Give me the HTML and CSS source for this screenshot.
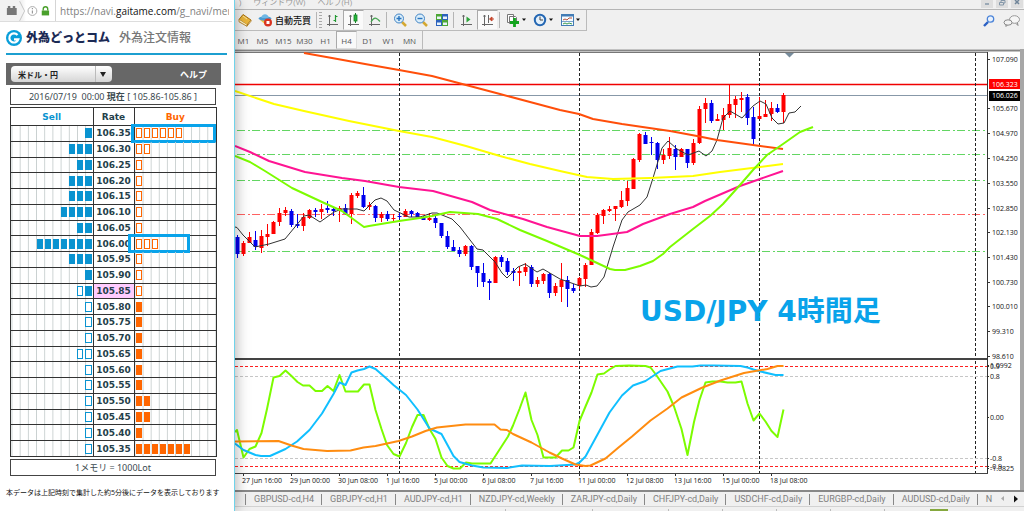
FILE: index.html
```html
<!DOCTYPE html>
<html lang="ja">
<head>
<meta charset="utf-8">
<title>USD/JPY 4時間足</title>
<link rel="stylesheet" href="styles.css">
</head>
<body>
<div class="desktop">
  <aside class="orders">
    <div class="address">
      <svg class="address-icons" width="56" height="22" viewBox="0 0 56 22" aria-hidden="true">
        <path d="M7 8h10v7H7zM8 6h2.500v2H8zM13 6h2.500v2H13z" fill="#777"/>
        <path d="M20 1l5 10-5 10" fill="none" stroke="#c4c4c4"/>
        <circle cx="33" cy="11" r="4.500" fill="none" stroke="#aaa"/>
        <path d="M33 10.500v3M33 8v1.200" stroke="#999" stroke-width="1.200"/>
        <path d="M44 10.500V9a2.300 2.300 0 0 1 4.600 0v1.500" fill="none" stroke="#4aa02c" stroke-width="1.400"/>
        <rect x="42.500" y="10.500" width="7.500" height="5" fill="#4aa02c"/>
      </svg>
      <span class="url">https://navi.<b>gaitame.com</b>/g_navi/menu</span>
    </div>
    <header class="brand">
      <svg width="16" height="16" viewBox="0 0 16 16" aria-hidden="true">
        <circle cx="8" cy="8" r="8" fill="#0a9ed9"/>
        <path d="M11.500 5A4.600 4.600 0 1 0 12.300 9.300H8" fill="none" stroke="#fff" stroke-width="2.200"/>
      </svg>
      <strong>外為どっとコム</strong>
      <h1>外為注文情報</h1>
    </header>
    <div class="pair-bar">
      <select aria-label="通貨ペア"><option>米ドル・円</option></select>
      <a href="#help">ヘルプ</a>
    </div>
    <p class="boxed stamp">2016/07/19&nbsp; 00:00 <b>現在</b> [ 105.86-105.86 ]</p>
    <table class="book">
      <thead><tr><th class="sell">Sell</th><th class="rate">Rate</th><th class="buy">Buy</th></tr></thead>
      <tbody id="book"></tbody>
    </table>
    <p class="boxed unit">1メモリ = 1000Lot</p>
    <p class="note">本データは上記時刻で集計した約5分後にデータを表示しております</p>
  </aside>

  <main class="terminal">
    <nav class="menu">
      <span>)</span><span>ウィンドウ(W)</span><span>ヘルプ(H)</span>
      <div class="window-buttons">
        <button aria-label="最小化"><svg width="12" height="8" viewBox="0 0 12 8"><path d="M4 4h4" stroke="#8497a8" stroke-width="1.500"/></svg></button>
        <button aria-label="元に戻す"><svg width="12" height="8" viewBox="0 0 12 8"><path d="M3.500 2.500h4v2.500h-4zM5 2V.5h4V3H8" fill="none" stroke="#8497a8"/></svg></button>
        <button aria-label="閉じる"><svg width="12" height="8" viewBox="0 0 12 8"><path d="M4 0l4 4M8 0L4 4" stroke="#71869a" stroke-width="1.500"/></svg></button>
      </div>
    </nav>
    <div class="tools-row">
      <div class="tools">
        <button class="tool book-tool" aria-label="メタエディター"><svg width="14" height="14" viewBox="0 0 14 14"><path d="M1 6.500L5 1.500l8 5.500-4 5z" fill="#e9b53c" stroke="#a8700d"/><path d="M1 6.500v2.300l8 4.500v-1.500M9 13.200l4-5V7" fill="#fff3c4" stroke="#a8700d" stroke-width=".8"/><path d="M5 3l4 3" stroke="#fbe59a"/></svg></button>
        <button class="tool auto-tool"><svg width="15" height="14" viewBox="0 0 15 14"><path d="M2 7l6 5 5-6z" fill="#efc33c"/><ellipse cx="7" cy="5.500" rx="6.500" ry="2.200" fill="#4c9bd2"/><path d="M3.500 5C3 0 11 0 10.500 5z" fill="#6fb7e4"/><circle cx="10" cy="9.500" r="4" fill="#d93420"/><rect x="8.500" y="8" width="3" height="3" fill="#fff"/></svg>自動売買</button>
        <i class="sep"></i><i class="grip"></i>
        <button class="tool" aria-label="バーチャート"><svg width="14" height="14" viewBox="0 0 14 14"><path d="M3.500 2v11M1 11.500h11M2.500 3.500l1-1.500 1 1.500" fill="none" stroke="#666"/><path d="M9.500 2v7M7.500 7.500h2M9.500 3.500h2" stroke="#249a34" stroke-width="1.200"/></svg></button>
        <button class="tool on" aria-label="ローソク足"><svg width="14" height="14" viewBox="0 0 14 14"><path d="M3.500 2v11M1 11.500h11M2.500 3.500l1-1.500 1 1.500" fill="none" stroke="#666"/><path d="M8.500 0v10" stroke="#178427"/><rect x="7" y="2" width="3" height="6" fill="#26b53a" stroke="#178427" stroke-width=".8"/></svg></button>
        <button class="tool" aria-label="ラインチャート"><svg width="14" height="14" viewBox="0 0 14 14"><path d="M3.500 2v11M1 11.500h11M2.500 3.500l1-1.500 1 1.500" fill="none" stroke="#666"/><path d="M3 9c3-5 5-5 9-.5" fill="none" stroke="#49a654" stroke-width="1.200"/></svg></button>
        <i class="sep"></i>
        <button class="tool" aria-label="拡大"><svg width="14" height="14" viewBox="0 0 14 14"><path d="M9 9l4 4" stroke="#d4a831" stroke-width="2.500"/><circle cx="6" cy="5.500" r="4.500" fill="#d9edfa" stroke="#4385c5"/><path d="M3.500 5.500h5M6 3v5" stroke="#2774bf" stroke-width="1.400"/></svg></button>
        <button class="tool" aria-label="縮小"><svg width="14" height="14" viewBox="0 0 14 14"><path d="M9 9l4 4" stroke="#d4a831" stroke-width="2.500"/><circle cx="6" cy="5.500" r="4.500" fill="#d9edfa" stroke="#4385c5"/><path d="M3.500 5.500h5" stroke="#2774bf" stroke-width="1.400"/></svg></button>
        <button class="tool" aria-label="整列"><svg width="14" height="14" viewBox="0 0 14 14"><path d="M1 1h6v6H1zM7 7h6v6H7z" fill="#4da736"/><path d="M7 1h6v6H7zM1 7h6v6H1z" fill="#2c62bd"/><path d="M2 3.500h4V6H2zM8 3.500h4V6H8zM2 9.500h4V12H2zM8 9.500h4V12H8z" fill="#e8f3fa"/></svg></button>
        <i class="sep"></i>
        <button class="tool" aria-label="自動スクロール"><svg width="14" height="14" viewBox="0 0 14 14"><path d="M3.500 2v11M1 11.500h11M2.500 3.500l1-1.500 1 1.500" fill="none" stroke="#666"/><path d="M6.500 3.500v6l4-3z" fill="#2ea43b"/></svg></button>
        <button class="tool on" aria-label="チャートシフト"><svg width="14" height="14" viewBox="0 0 14 14"><path d="M3.500 2v11M1 11.500h11M2.500 3.500l1-1.500 1 1.500M7.500 2v8" fill="none" stroke="#666"/><path d="M8.500 6L11 4v4zM10 6h3" fill="#c6462c" stroke="#c6462c"/></svg></button>
        <i class="sep"></i>
        <button class="tool wide" aria-label="インディケータ"><svg width="20" height="14" viewBox="0 0 20 14"><path d="M1.500 1.500h6v8h-6zM3.500 3.500h6l1 1v6h-7z" fill="#fff" stroke="#777"/><path d="M8.500 5v9M4 9.500h9" stroke="#13a51e" stroke-width="2.800"/><path d="M16 5.500h4l-2 2.500z" fill="#111"/></svg></button>
        <button class="tool wide" aria-label="時間足"><svg width="20" height="14" viewBox="0 0 20 14"><circle cx="7" cy="7" r="5.200" fill="#e3f0fb" stroke="#2467b3" stroke-width="2"/><path d="M7 3.500V7h3" fill="none" stroke="#444"/><path d="M16 5.500h4l-2 2.500z" fill="#111"/></svg></button>
        <button class="tool wide" aria-label="定型チャート"><svg width="20" height="14" viewBox="0 0 20 14"><rect x="1.500" y="1.500" width="12" height="11" fill="#f6fbff" stroke="#427cb5"/><path d="M1 2.500h13" stroke="#427cb5" stroke-width="2"/><path d="M3 7l2-1 2 1 2-2h3" fill="none" stroke="#b5523b"/><path d="M2 8.500h11" stroke="#427cb5" stroke-width=".7"/><path d="M3 11l2-1 2 1 2-1 3 1" fill="none" stroke="#3c9b4c"/><path d="M16 5.500h4l-2 2.500z" fill="#111"/></svg></button>
      </div>
      <div class="side-tools">
        <button aria-label="検索"><svg width="12" height="12" viewBox="0 0 12 12"><path d="M1 11l4-4" stroke="#2b60c4" stroke-width="2.400"/><circle cx="7.500" cy="4" r="3.200" fill="#e8f1fc" stroke="#4a83d8" stroke-width="1.300"/></svg></button>
        <button aria-label="チャット"><svg width="18" height="12" viewBox="0 0 18 12"><path d="M13 8.500l2 2-.5-2.500" fill="#eee" stroke="#888"/><ellipse cx="11.500" cy="4.500" rx="5" ry="3.800" fill="#f6f6f6" stroke="#999"/><path d="M3 9v2.500l2-2" fill="#eee" stroke="#888"/><ellipse cx="5" cy="7.500" rx="4" ry="2.700" fill="#f2f2f2" stroke="#888"/></svg></button>
      </div>
    </div>
    <div class="frames">
      <button>M1</button><button>M5</button><button>M15</button><button>M30</button><button>H1</button><button class="on">H4</button><button>D1</button><button>W1</button><button>MN</button>
    </div>
    <div class="chart-row">
      <svg class="chart" viewBox="235 49 785 441" role="img" aria-label="USD/JPY 4時間足">
        <rect x="235" y="49" width="785" height="441" fill="#fff"/>
        <path d="M235 50.500H1020" stroke="#858585" stroke-width="2"/>
        <path d="M235 52.500H988" stroke="#777"/>
        <g class="level"><path d="M237 130.500H987M237 154.500H987M237 180.500H987M237 251.500H987"/><path class="mid" d="M237 214.500H987"/></g>
        <path d="M235 95.500H987" stroke="#8798a8"/>
        <path d="M235 84.500H987" stroke="#f00000" stroke-width="1.500"/>
        <path class="day" d="M399.500 53V358M579.500 53V358M759.500 53V358M975.500 53V358M399.500 361V473M579.500 361V473M759.500 361V473M975.500 361V473"/>
        <path d="M235 376.500H987M235 458.500H987" stroke="#c6c6c6" stroke-dasharray="3 2"/>
        <path d="M235 366.500H987M235 466.500H987" stroke="#ff2020" stroke-dasharray="3 2"/>
        <g id="candles"></g>
        <g class="thin"><polyline points="235,227 237,227.500 243,235 255,247 269,244 285,239 304,216 309,215 320,222 334,212 342,209 357,209 364,211 375,200 381,198 387,201 394,210 409,217 420,217 432,213 437,213 452,219 460,227 477,249 483,250 495,262 502,273 507,278 518,267 525,264 537,272 543,269 560,279 580,286 586,285 591,287 597,286 604,277 613,247 622,220 628,212 640,205 647,197 653,178 662,148 668,141 677,149 688,155 699,151 706,156 712,151 717,140 723,118 730,111 742,118 753,106 760,101 766,104 772,118 778,124 784,123 789,113 795,112 801,106"/></g>
        <g class="curve">
          <polyline stroke="#ff4e0a" points="304,53 332,58 365,64 399,70 432,76 466,85 500,94 530,102 560,110 579,114 593,119 622,124 670,131 697,136 717,140 753,145 783,149"/>
          <polyline stroke="#ffff00" points="235,91 274,104 304,111 349,121 399,131 432,137 466,146 500,156 530,164 560,171 587,177 613,179 650,178 693,176 720,172 760,167 783,164"/>
          <polyline stroke="#ff1493" points="235,146 250,152 269,161 305,172 342,178 365,181 399,187 433,191 472,202 490,210 523,219 547,227 580,236 597,236 627,232 643,224 670,214 693,207 705,201 740,186 760,179 783,171"/>
          <polyline stroke="#7cfc00" points="235,156 250,162 265,171 292,188 322,202 342,211 364,227 369,226 399,221 420,218 432,216 450,212 478,214 497,219 520,230 547,241 580,255 610,269 615,270 625,270 640,266 653,261 663,254 670,247 693,229 710,216 723,204 740,185 753,170 767,155 783,144 800,132 813,127"/>
          <polyline stroke="#7cfc00" points="235,432 237,430 243.500,457.500 249.500,449 255.500,446.500 261.500,433 267,409 273.500,377.500 279.500,376 285.500,370.500 291.500,376 297.500,382 303,385.500 309.500,385.500 315.500,391 322,391 327.500,386 333.500,391 339.500,375 345.500,391.500 358,391.500 364,384.500 369.500,384.500 375.500,410 381.500,429 387,445 393.500,454 399.500,456.500 406,443 412,427 417.500,415 423.500,415 429.500,429 435.500,439 441.500,457.500 447.500,466 453.500,468.500 460,468.500 466,462.500 472,463.500 490.500,463.500 496,455 508,436.500 513,425.500 519.500,409 525.500,392.500 531.500,420 537.500,435 543.500,457.500 555.500,457.500 562,450.500 568.500,450.500 573.500,447.500 579.500,421 585.500,406.500 591.500,392.500 597.500,374.500 604,373.500 609.500,369.500 615.500,366 629,365.500 645.500,366 650.500,367.500 655.500,374 667.500,391.500 674,406.500 681.500,429 687.500,455 694,422 699.500,400 705.500,382.500 712.500,381.500 720.500,381.500 727.500,382.500 735.500,382.500 741.500,381.500 747.500,403.500 753.500,420.500 759.500,413.500 765.500,421.500 771.500,431 777.500,437 783.500,409.500"/>
          <polyline stroke="#10bfff" points="235,443.500 243.500,450 255.500,455 261,456 270,456 285.500,449 297,441.500 309.500,430 322,413.500 333.500,394 339.500,382.500 345.500,385 351.500,372.500 357.500,370.500 364,369 369.500,366.500 375.500,369 387,379 393.500,385 406,395 417.500,409.500 429.500,428.500 441.500,434 453.500,456 459.500,462 472,465.500 483.500,467.500 507,468 522,465.500 550,466 575.500,464.500 579.500,462.500 585.500,456.500 597.500,434.500 609.500,412.500 622,395.500 633,385.500 645.500,381 660.500,371 677.500,366.500 692.500,366.500 700.500,365.500 714,365.500 740.500,366 747.500,367.500 753.500,369.500 760.500,371.500 775.500,375 783.500,375"/>
          <polyline stroke="#ff8c10" points="235,441.500 278.500,441 291.500,445.500 303.500,449 327,451 350.500,450.500 363.500,447.500 375.500,446 398.500,441 412,436.500 425.500,431 437,427.500 465.500,424.500 494.500,424.500 500.500,429.500 507,430 513,434 531.500,442.500 549.500,452.500 562,458.500 575.500,464.500 585.500,466 590.500,465.500 605.500,458.500 618.500,447.500 632,436.500 650.500,420.500 667.500,408.500 681.500,397.500 702.500,387.500 720.500,380.500 744,373 767.500,369 777.500,366 783.500,366"/>
        </g>
        <path d="M785 53h9l-4.500 4.500z" fill="#778c9c"/>
        <path d="M235 359H988" stroke="#444" stroke-width="2"/>
        <path d="M987.500 52V474" stroke="#333"/>
        <path d="M235 473.500H988" stroke="#444"/>
        <g id="axes" class="axis"></g>
        <rect x="989" y="79" width="31" height="10" fill="#f00"/><rect x="989" y="91" width="31" height="10" fill="#000"/>
        <g class="axis tag"><text x="992" y="87">106.323</text><text x="992" y="98">106.026</text></g>
        <text class="caption" x="640" y="321">USD/JPY 4時間足</text>
      </svg>
      <i class="edge"></i>
    </div>
    <div class="tabs">
      <button>GBPUSD-cd,H4</button><button>GBPJPY-cd,H1</button><button>AUDJPY-cd,H1</button><button>NZDJPY-cd,Weekly</button><button>ZARJPY-cd,Daily</button><button>CHFJPY-cd,Daily</button><button>USDCHF-cd,Daily</button><button>EURGBP-cd,Daily</button><button>AUDUSD-cd,Daily</button><button class="cut">N</button>
      <svg class="tab-arrows" width="24" height="14" viewBox="0 0 24 14" aria-hidden="true"><path d="M4 4v5L1 6.500z" fill="#aaa"/><path d="M14 3.500v7l4-3.500z" fill="#111"/></svg>
    </div>
    <div class="status"><i></i><i></i><i></i><i></i><i></i><i></i><i></i><b></b></div>
  </main>
</div>
<script src="app.js"></script>
</body>
</html>
```

FILE: styles.css
```css
* { box-sizing: border-box; }
body { margin: 0; overflow: hidden; background: #f0f0f0; font-family: "Open Sans", "Noto Sans CJK JP", sans-serif; }
button { border: 0; padding: 0; margin: 0; background: none; font: inherit; color: inherit; }
svg { display: block; flex: none; }
p, h1 { margin: 0; }
.desktop { display: flex; min-height: 100vh; }

.orders { flex: none; width: 235px; background: #fff; border-right: 1px solid #6fd3ea; box-shadow: 0 0 14px rgba(0, 0, 0, .35); z-index: 1; position: relative; }
.address { display: flex; align-items: center; height: 22px; margin-right: 2px; background: linear-gradient(90deg, #f2f2f2 22px, #fff 26px); border-bottom: 1px solid #ddd; overflow: hidden; }
.address-icons { border-right: 1px solid #d5d5d5; }
.url { margin: 0 3px 0 4px; flex: 1; min-width: 0; overflow: hidden; font-size: 10px; line-height: 20px; color: #808080; white-space: nowrap; }
.url b { font-weight: 400; color: #111; }
.brand { display: flex; align-items: center; height: 33px; margin: 0 7px 0 6px; border-bottom: 2px solid #1c9fd0; gap: 4px; }
.brand strong { font-size: 12px; line-height: 16px; font-weight: 900; color: #1b2a55; }
.brand h1 { margin-left: 5px; font-size: 12px; line-height: 16px; font-weight: 500; color: #777; }
.pair-bar { position: relative; display: flex; align-items: center; justify-content: space-between; height: 22px; margin: 8px 13px 0 6px; padding: 0 14px 0 5px; background: #676767; }
.pair-bar select { appearance: none; width: 101px; height: 16px; padding: 0 7px; border: 0; border-radius: 4px; color: #222; font: bold 8px "Noto Sans CJK JP", sans-serif; background: linear-gradient(90deg, transparent 84px, #bbb 84px, #bbb 85px, transparent 85px), linear-gradient(#fff, #d5d5d5); }
.pair-bar::after { content: ""; position: absolute; left: 94px; top: 9px; border: 3px solid transparent; border-top: 5px solid #222; border-bottom: 0; pointer-events: none; }
.pair-bar a { font: bold 9px "Noto Sans CJK JP", sans-serif; color: #fff; text-decoration: none; }
.boxed { margin: 0 18px 0 10px; border: 1px solid #444; font: 9px/15px "Noto Sans", "Noto Sans CJK JP", sans-serif; text-align: center; height: 17px; color: #3b4a50; white-space: nowrap; }
.stamp { margin-top: 3px; }
.book { width: 207px; height: 350px; margin: 2px 0 0 10px; border-collapse: collapse; table-layout: fixed; font: bold 9px/12px "DejaVu Sans", sans-serif; color: #24404a; }
.book th, .book td { padding: 0; border: 1px solid #333; text-align: center; line-height: 12px; }
.book thead tr { height: 18px; }
.book .rate { width: 41px; }
.book th.sell { color: #0a93d0; }
.book th.buy { color: #f60; }
.bars-cell { position: relative; background: linear-gradient(90deg, #c9d0d0 1px, transparent 1px) 0 0 / 10% 100%; }
.bars { display: flex; }
.bars i { flex: none; width: calc(10% - 2px); margin: 0 1px; height: 10px; border: 1px solid; }
.sell-cell .bars { justify-content: flex-end; color: #0a93d0; }
.sell-cell .full { background: #0a93d0; }
.buy-cell .bars { color: #f60; }
.buy-cell .full { background: #f60; }
.current { background: #ffccff; }
.mark { position: absolute; top: -2px; bottom: -2px; left: -4px; right: 0; border: 3px solid #09a3ea; }
.mark.short { left: -7px; right: 26px; }
.unit { margin-top: 2px; }
.note { margin: 11px 0 0 6px; font-size: 7px; line-height: 12px; color: #111; white-space: nowrap; }

.terminal { flex: 1; min-width: 0; color: #777; }
.menu { display: flex; height: 10px; border-bottom: 1px solid #b5b5b5; overflow: hidden; gap: 12px; padding-left: 4px; font-size: 8px; line-height: 4px; color: #999; }
.window-buttons { display: flex; margin-left: auto; gap: 3px; padding-right: 1px; }
.window-buttons button { width: 12px; height: 8px; background: #dedede; }
.tools-row { display: flex; justify-content: space-between; height: 21px; }
.tools { display: flex; width: 352px; border: 1px solid #bbb; border-width: 0 1px 1px 0; }
.tool { display: flex; align-items: center; justify-content: center; width: 21px; }
.tool.on { background: #fafafa; border: 1px solid #ccc; border-color: #aaa #eee #eee #aaa; }
.book-tool { width: 19px; }
.auto-tool { width: 61px; gap: 2px; font: 500 9px "Noto Sans CJK JP", sans-serif; color: #111; white-space: nowrap; }
.tool.wide { width: 27px; }
.sep { width: 1px; margin: 2px 2px 2px 1px; background: #b5b5b5; }
.grip { width: 3px; margin: 2px 0; background: repeating-linear-gradient(#aaa 0 1px, transparent 1px 3px); }
.side-tools { display: flex; align-items: center; gap: 8px; padding-right: 3px; }
.frames { display: flex; width: 188px; height: 18px; border-right: 1px solid #bbb; font: 8px "Open Sans", sans-serif; color: #555; }
.frames button { width: 21px; }
.frames button:first-child { width: 17px; }
.frames .on { background: #f9f9f9; border: 1px solid #aaa; border-color: #aaa #ddd #ddd #aaa; }
.chart-row { display: flex; }
.chart { flex: 1; min-width: 0; height: auto; }
.edge { width: 4px; background: #a7a7a7; }
.level path { stroke: #63d663; stroke-dasharray: 8 3 2 2; }
.level .mid { stroke: #ff6262; }
.day { stroke: #222; stroke-dasharray: 3 2; }
.thin { fill: none; stroke: #333; stroke-width: 1; }
.curve { fill: none; stroke-width: 2; stroke-linejoin: round; }
.axis { font: 7px "Open Sans", sans-serif; fill: #111; stroke: none; }
.axis path { stroke: #333; }
.tag { fill: #fff; }
.caption { font: bold 28px "DejaVu Sans", "Noto Sans CJK JP", sans-serif; fill: #09a3ea; }
.up { fill: #f00; stroke: #f00; }
.down { fill: #00e; stroke: #00e; }
.tabs { display: flex; align-items: center; height: 17px; padding-left: 10px; border-top: 2px solid #888; border-bottom: 1px solid #d2d2d2; overflow: hidden; font: 9px/11px Roboto, sans-serif; color: #808080; }
.tabs button { flex: none; padding: 0 7px 0 8px; border-left: 1px solid #888; white-space: nowrap; }
.tabs .cut { flex: 1; min-width: 0; overflow: hidden; text-align: left; padding-right: 0; }
.status { display: flex; height: 4px; padding: 2px 0 0 270px; }
.status i { flex: none; width: 54px; border-left: 1px solid #bbb; }
.status i:first-child { width: 87px; }
.status i:nth-child(2) { width: 76px; }
.status b { width: 18px; background: #85a83e; margin-left: -8px; }
```

FILE: app.js
```js
// Rate, sell [filled, hollow], buy [filled, hollow]
const book = [
  ["106.35", [1, 0], [0, 6], "mark"], ["106.30", [3, 0], [0, 2]], ["106.25", [2, 0], [0, 1]],
  ["106.20", [3, 0], [0, 1]], ["106.15", [3, 0], [0, 1]], ["106.10", [4, 0], [0, 1]],
  ["106.05", [2, 0], [0, 1]], ["106.00", [7, 0], [0, 3], "mark short"], ["105.95", [3, 0], [0, 1]],
  ["105.90", [1, 0], [0, 1]], ["105.85", [1, 1], [0, 1]], ["105.80", [0, 1], [1, 0]],
  ["105.75", [0, 1], [1, 0]], ["105.70", [0, 1], [1, 0]], ["105.65", [0, 2], [1, 0]],
  ["105.60", [0, 1], [1, 0]], ["105.55", [0, 1], [1, 0]], ["105.50", [0, 1], [2, 0]],
  ["105.45", [0, 1], [2, 0]], ["105.40", [0, 1], [1, 0]], ["105.35", [0, 1], [7, 0]]
];
const full = n => '<i class="full"></i>'.repeat(n);
const hollow = n => "<i></i>".repeat(n);
document.getElementById("book").innerHTML = book.map(([rate, sell, buy, mark]) =>
  `<tr><td class="bars-cell sell-cell"><div class="bars">${hollow(sell[1])}${full(sell[0])}</div></td>` +
  `<td class="${rate === "105.85" ? "current" : ""}">${rate}</td>` +
  `<td class="bars-cell buy-cell"><div class="bars">${full(buy[0])}${hollow(buy[1])}</div>` +
  `${mark ? `<span class="${mark}"></span>` : ""}</td></tr>`).join("");

// Direction, high, body top, body bottom, low
const candles = `d235,237,254,258 u241,243,254,256 u232,237,243,243 d231,240,247,250 u230,236,248,253 u224,234,237,246
u221,222,234,234 u208,213,222,226 u207,210,213,216 d209,211,225,227 d214,224,226,228 u213,217,226,231 u209,210,218,219
d208,210,212,217 u204,209,212,219 d201,208,210,213 d207,209,211,216 u206,208,210,222 d204,208,214,215 u193,195,214,224
u191,193,196,198 d187,195,207,208 u202,205,207,210 d205,206,218,222 u212,214,218,222 d211,214,219,221 u214,218,219,222
d213,216,217,219 u209,211,217,217 d210,211,214,217 d212,213,217,217 d216,217,220,220 u213,218,220,221 d216,218,223,228
d223,223,236,238 d231,236,247,249 d240,247,251,251 d247,250,254,257 u245,246,254,256 d245,246,267,270 d266,266,273,287
d263,273,282,287 d279,281,283,300 u256,257,283,283 d255,257,262,267 d258,261,272,275 d268,271,273,281 u267,271,273,286
u263,267,272,276 d265,267,284,287 u277,280,284,287 u273,274,281,284 d273,274,293,298 u283,286,293,296 u263,280,287,302
d276,280,289,307 d284,288,291,293 u277,278,286,289 u263,265,279,287 u229,232,265,265 u213,215,233,234 u209,210,216,224
u206,209,211,212 u206,206,209,221 u191,200,207,208 u181,188,201,206 u158,159,189,189 u133,134,160,162 d132,135,144,144
d137,142,143,155 d142,143,160,169 u149,155,160,164 u137,148,156,159 d145,149,157,170 u148,149,157,157 d149,149,163,168
u139,143,163,165 u106,109,143,144 u98,103,109,123 d100,103,121,123 u114,119,121,121 u108,115,120,130 u85,104,115,118
u96,99,105,118 u92,98,100,112 d94,97,118,125 d107,117,139,145 u97,116,119,119 u100,114,117,117 u102,108,114,121
d104,108,112,113 u93,95,112,123`.split(/\s+/);
document.getElementById("candles").innerHTML = candles.map((c, n) => {
  const [high, top, bottom, low] = c.slice(1).split(",").map(Number);
  const x = 237 + 6 * n;
  return `<g class="${c[0] === "u" ? "up" : "down"}"><path d="M${x + .5} ${high}V${low}"/>` +
    `<rect x="${x - 1.5}" y="${top}" width="4" height="${bottom - top}" stroke="none"/></g>`;
}).join("");

const prices = [["107.090", 59], ["105.670", 108], ["104.970", 133], ["104.250", 158], ["103.550", 183],
  ["102.850", 208], ["102.130", 232], ["101.430", 257], ["100.730", 282], ["100.010", 306], ["99.310", 331], ["98.610", 356]];
const levels = [["1.0992", 365], ["0.9", 366], ["0.8", 376], ["0.00", 417], ["-0.8", 458], ["-0.9", 466], ["-1.0825", 468]];
const times = ["27 Jun 16:00", "29 Jun 00:00", "30 Jun 08:00", "1 Jul 16:00", "5 Jul 00:00", "6 Jul 08:00",
  "7 Jul 16:00", "11 Jul 00:00", "12 Jul 08:00", "13 Jul 16:00", "15 Jul 00:00", "18 Jul 08:00"];
document.getElementById("axes").innerHTML =
  prices.map(([t, y]) => `<path d="M988 ${y + .5}h2"/><text x="992" y="${y + 3}">${t}</text>`).join("") +
  levels.map(([t, y]) => `<path d="M988 ${y + .5}h1"/><text x="990" y="${y + 3}">${t}</text>`).join("") +
  times.map((t, n) => `<path d="M${243.5 + 48 * n} 474v2"/><text x="${242 + 48 * n}" y="483">${t}</text>`).join("");
```
